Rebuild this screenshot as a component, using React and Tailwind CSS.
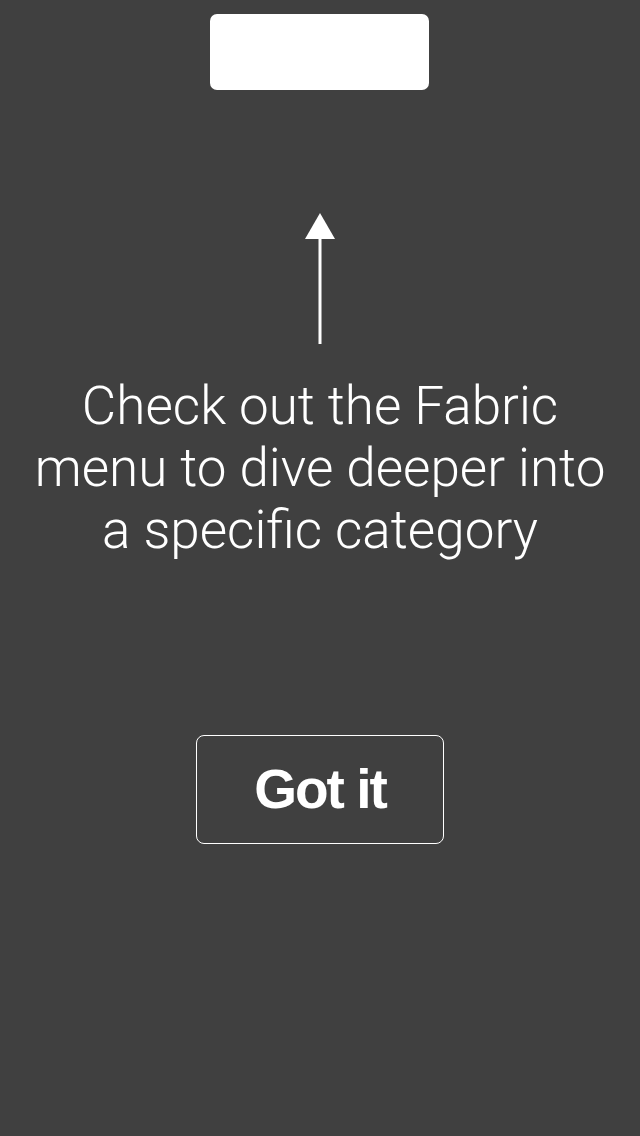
const App = () => {
  return (
    <div className="w-[640px] h-[1136px] bg-[#404040] flex flex-col items-center font-['Roboto',sans-serif] text-white">
      {/* highlighted menu slot */}
      <div className="mt-[14px] w-[219px] h-[76px] bg-white rounded-[7px] -translate-x-[1px]" />

      {/* arrow */}
      <svg className="mt-[123px]" width="30" height="131" viewBox="0 0 30 131">
        <polygon points="15,0 30,26 0,26" fill="#fff" />
        <rect x="13.5" y="25" width="3" height="106" fill="#fff" />
      </svg>

      <p className="mt-[31px] text-center text-[53px] leading-[62px] font-light whitespace-nowrap">
        Check out the Fabric
        <br />
        menu to dive deeper into
        <br />
        a specific category
      </p>

      <button className="mt-[174px] w-[248px] h-[109px] border border-white rounded-[8px] flex items-center justify-center font-['Liberation_Sans',sans-serif] font-bold text-[55px] tracking-[-2px]">
        Got it
      </button>
    </div>
  );
};

export default App;
